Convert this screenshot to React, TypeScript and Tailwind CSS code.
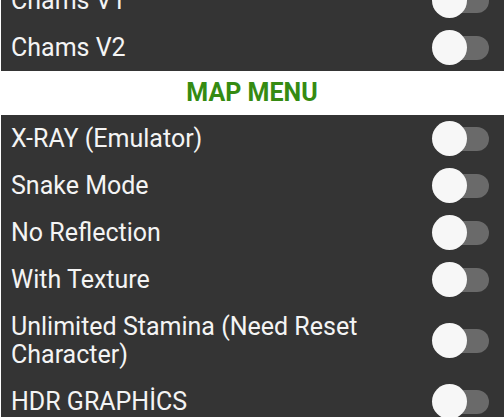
import React, { useState } from "react";

type Row =
  | { kind: "toggle"; label: string }
  | { kind: "header"; label: string };

const rows: Row[] = [
  { kind: "toggle", label: "Chams V1" },
  { kind: "toggle", label: "Chams V2" },
  { kind: "header", label: "MAP MENU" },
  { kind: "toggle", label: "X-RAY (Emulator)" },
  { kind: "toggle", label: "Snake Mode" },
  { kind: "toggle", label: "No Reflection" },
  { kind: "toggle", label: "With Texture" },
  { kind: "toggle", label: "Unlimited Stamina (Need Reset Character)" },
  { kind: "toggle", label: "HDR GRAPHİCS" },
];

const Switch = ({ on, onClick }: { on: boolean; onClick: () => void }) => (
  <button
    onClick={onClick}
    className="relative h-[35px] w-[57px] shrink-0"
    aria-pressed={on}
  >
    <span className="absolute right-0 top-[5.5px] h-[24px] w-[49px] rounded-full bg-[#6a6a6a]" />
    <span
      className={
        on
          ? "absolute right-0 top-0 h-[35px] w-[35px] rounded-full bg-[#f7f7f7]"
          : "absolute left-0 top-0 h-[35px] w-[35px] rounded-full bg-[#f7f7f7]"
      }
    />
  </button>
);

export default function App() {
  const [state, setState] = useState<Record<string, boolean>>({});

  return (
    <div className="h-[417px] overflow-hidden bg-white pl-px font-['Roboto','Liberation_Sans',sans-serif]">
      <div className="-mt-[23px] flex flex-col">
        {rows.map((row) =>
          row.kind === "header" ? (
            <div
              key={row.label}
              className="-ml-px flex h-[44px] items-center justify-center bg-white text-[25px] font-bold text-[#358b12]"
            >
              {row.label}
            </div>
          ) : (
            <div
              key={row.label}
              className="flex min-h-[47px] items-center justify-between bg-[#343434] pl-[10px] pr-[15px]"
            >
              <span className="max-w-[370px] py-[9.5px] text-[25px] leading-[28px] text-[#f4f4f4]">
                {row.label}
              </span>
              <Switch
                on={!!state[row.label]}
                onClick={() =>
                  setState((s) => ({ ...s, [row.label]: !s[row.label] }))
                }
              />
            </div>
          )
        )}
      </div>
    </div>
  );
}
